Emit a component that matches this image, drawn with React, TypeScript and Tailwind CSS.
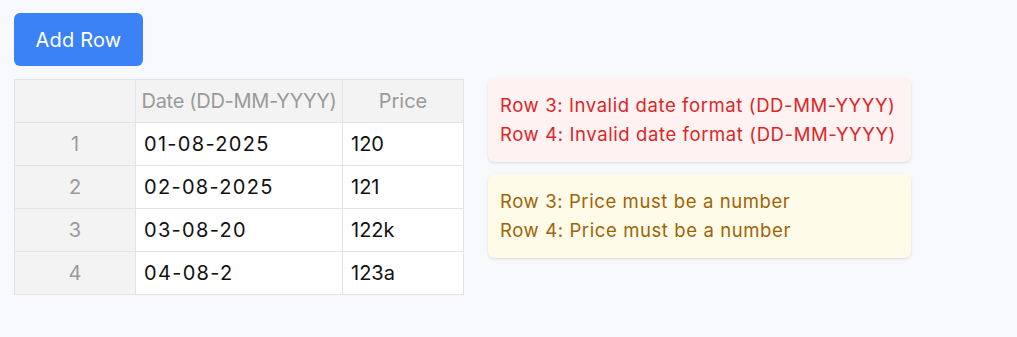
import React, { useState } from 'react';

type Row = { date: string; price: string };

const initialRows: Row[] = [
    { date: '01-08-2025', price: '120' },
    { date: '02-08-2025', price: '121' },
    { date: '03-08-20', price: '122k' },
    { date: '04-08-2', price: '123a' },
];

const App: React.FC = () => {
    const [rows, setRows] = useState<Row[]>(initialRows);

    const dateErrors = rows
        .map((r, i) => (/^\d{2}-\d{2}-\d{4}$/.test(r.date) ? null : `Row ${i + 1}: Invalid date format (DD-MM-YYYY)`))
        .filter(Boolean) as string[];
    const priceErrors = rows
        .map((r, i) => (/^\d+(\.\d+)?$/.test(r.price) ? null : `Row ${i + 1}: Price must be a number`))
        .filter(Boolean) as string[];

    const addRow = () => setRows([...rows, { date: '', price: '' }]);

    return (
        <div
            className="min-h-screen bg-[#f8f9fd] px-[14px] pt-[13px]"
            style={{ fontFamily: 'Inter, "Noto Sans", sans-serif' }}
        >
            <button
                onClick={addRow}
                className="w-[129px] h-[53px] rounded-md bg-[#3b82f6] text-white text-[20px] tracking-[0.2px]"
            >
                Add Row
            </button>

            <div className="flex items-start gap-6 mt-[13px]">
                <table className="border-collapse border border-[#e3e3e3] text-[20px]">
                    <thead>
                        <tr className="h-[43px]">
                            <th className="w-[121px] bg-[#f3f3f3] border border-[#e3e3e3]" />
                            <th className="w-[207px] bg-[#f3f3f3] border border-[#e3e3e3] font-normal text-[#9a9a9a] tracking-[-0.3px] px-1">
                                Date (DD-MM-YYYY)
                            </th>
                            <th className="w-[121px] bg-[#f3f3f3] border border-[#e3e3e3] font-normal text-[#9a9a9a]">
                                Price
                            </th>
                        </tr>
                    </thead>
                    <tbody>
                        {rows.map((r, i) => (
                            <tr key={i} className="h-[43px]">
                                <td className="bg-[#f3f3f3] border border-[#e3e3e3] text-center text-[#9a9a9a]">{i + 1}</td>
                                <td className="bg-white border border-[#e3e3e3] pl-2 text-[#111] tracking-[1.3px]">{r.date}</td>
                                <td className="bg-white border border-[#e3e3e3] pl-2 text-[#111]">{r.price}</td>
                            </tr>
                        ))}
                    </tbody>
                </table>

                <div className="w-[423px] -mt-px flex flex-col gap-3 text-[18.5px] tracking-[0.6px]">
                    {dateErrors.length > 0 && (
                        <div className="rounded-md bg-[#fef2f2] text-[#dc2626] px-3 py-[13px] leading-[29px] shadow-sm">
                            {dateErrors.map((e) => (
                                <div key={e}>{e}</div>
                            ))}
                        </div>
                    )}
                    {priceErrors.length > 0 && (
                        <div className="rounded-md bg-[#fefce8] text-[#a16207] px-3 py-[13px] leading-[29px] shadow-sm">
                            {priceErrors.map((e) => (
                                <div key={e}>{e}</div>
                            ))}
                        </div>
                    )}
                </div>
            </div>
        </div>
    );
};

export default App;
